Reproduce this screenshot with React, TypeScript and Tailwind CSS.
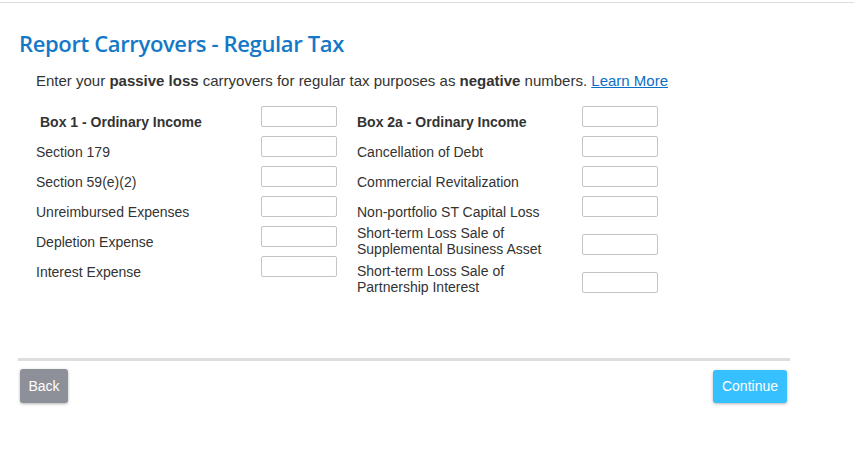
import React from "react";

const leftRows: { label: string; bold?: boolean; two?: boolean }[] = [
  { label: "Box 1 - Ordinary Income", bold: true },
  { label: "Section 179" },
  { label: "Section 59(e)(2)" },
  { label: "Unreimbursed Expenses" },
  { label: "Depletion Expense" },
  { label: "Interest Expense" },
];

const rightRows: { label: string; bold?: boolean; two?: boolean; l2?: string }[] = [
  { label: "Box 2a - Ordinary Income", bold: true },
  { label: "Cancellation of Debt" },
  { label: "Commercial Revitalization" },
  { label: "Non-portfolio ST Capital Loss" },
  { label: "Short-term Loss Sale of", l2: "Supplemental Business Asset", two: true },
  { label: "Short-term Loss Sale of", l2: "Partnership Interest", two: true },
];

function Row({ r, boldPad }: { r: { label: string; bold?: boolean; two?: boolean; l2?: string }; boldPad?: boolean }) {
  if (r.two) {
    return (
      <div className="flex h-[38px]">
        <div className="w-[225px] -mt-px leading-4 text-[14px] text-[#333]">
          <div>{r.label}</div>
          <div>{r.l2}</div>
        </div>
        <input className="mt-[8px] w-[76px] h-[21px] border border-[#c4c4c4] rounded-[2px] bg-white" />
      </div>
    );
  }
  return (
    <div className="flex h-[30px]">
      <div
        className={`w-[225px] mt-[8px] leading-4 text-[14px] text-[#333] ${r.bold ? "font-bold" : ""} ${
          r.bold && boldPad ? "pl-[4px]" : ""
        }`}
      >
        {r.label}
      </div>
      <input className="w-[76px] h-[21px] border border-[#c4c4c4] rounded-[2px] bg-white" />
    </div>
  );
}

export default function App() {
  return (
    <div className="w-[854px] h-[452px] bg-white font-['Liberation_Sans',Arial,sans-serif] overflow-hidden">
      <div className="h-[2px]" />
      <div className="h-px bg-[#dcdcdc]" />
      <div className="pl-[19px] pt-[26px]">
        <h1 className="font-['Open_Sans',sans-serif] font-semibold text-[22px] leading-[28px] text-[#1478c8] tracking-[-0.36px]">
          Report Carryovers - Regular Tax
        </h1>
      </div>
      <p className="pl-[36px] mt-[15px] text-[15px] leading-[18px] text-[#333]">
        Enter your <b>passive loss</b> carryovers for regular tax purposes as <b>negative</b> numbers.{" "}
        <a href="#" className="text-[#0b6fc6] underline">
          Learn More
        </a>
      </p>
      <div className="flex pl-[36px] mt-[16px] gap-[20px] h-[212px]">
        <div className="flex flex-col">
          {leftRows.map((r, i) => (
            <Row key={i} r={r} boldPad />
          ))}
        </div>
        <div className="flex flex-col">
          {rightRows.map((r, i) => (
            <Row key={i} r={r} />
          ))}
        </div>
      </div>
      <div className="ml-[18px] mt-[40px] w-[772px] h-[3px] bg-[#dedede]" />
      <div className="flex justify-between ml-[20px] w-[767px] mt-[8px]">
        <button className="w-[48px] h-[34px] rounded-[3px] bg-[#8e9099] text-white text-[14px] shadow-[0_1px_3px_rgba(0,0,0,0.3)]">
          Back
        </button>
        <button className="mt-px w-[74px] h-[33px] rounded-[3px] bg-[#36c0ff] text-white text-[14px] shadow-[0_1px_3px_rgba(0,0,0,0.3)]">
          Continue
        </button>
      </div>
    </div>
  );
}
